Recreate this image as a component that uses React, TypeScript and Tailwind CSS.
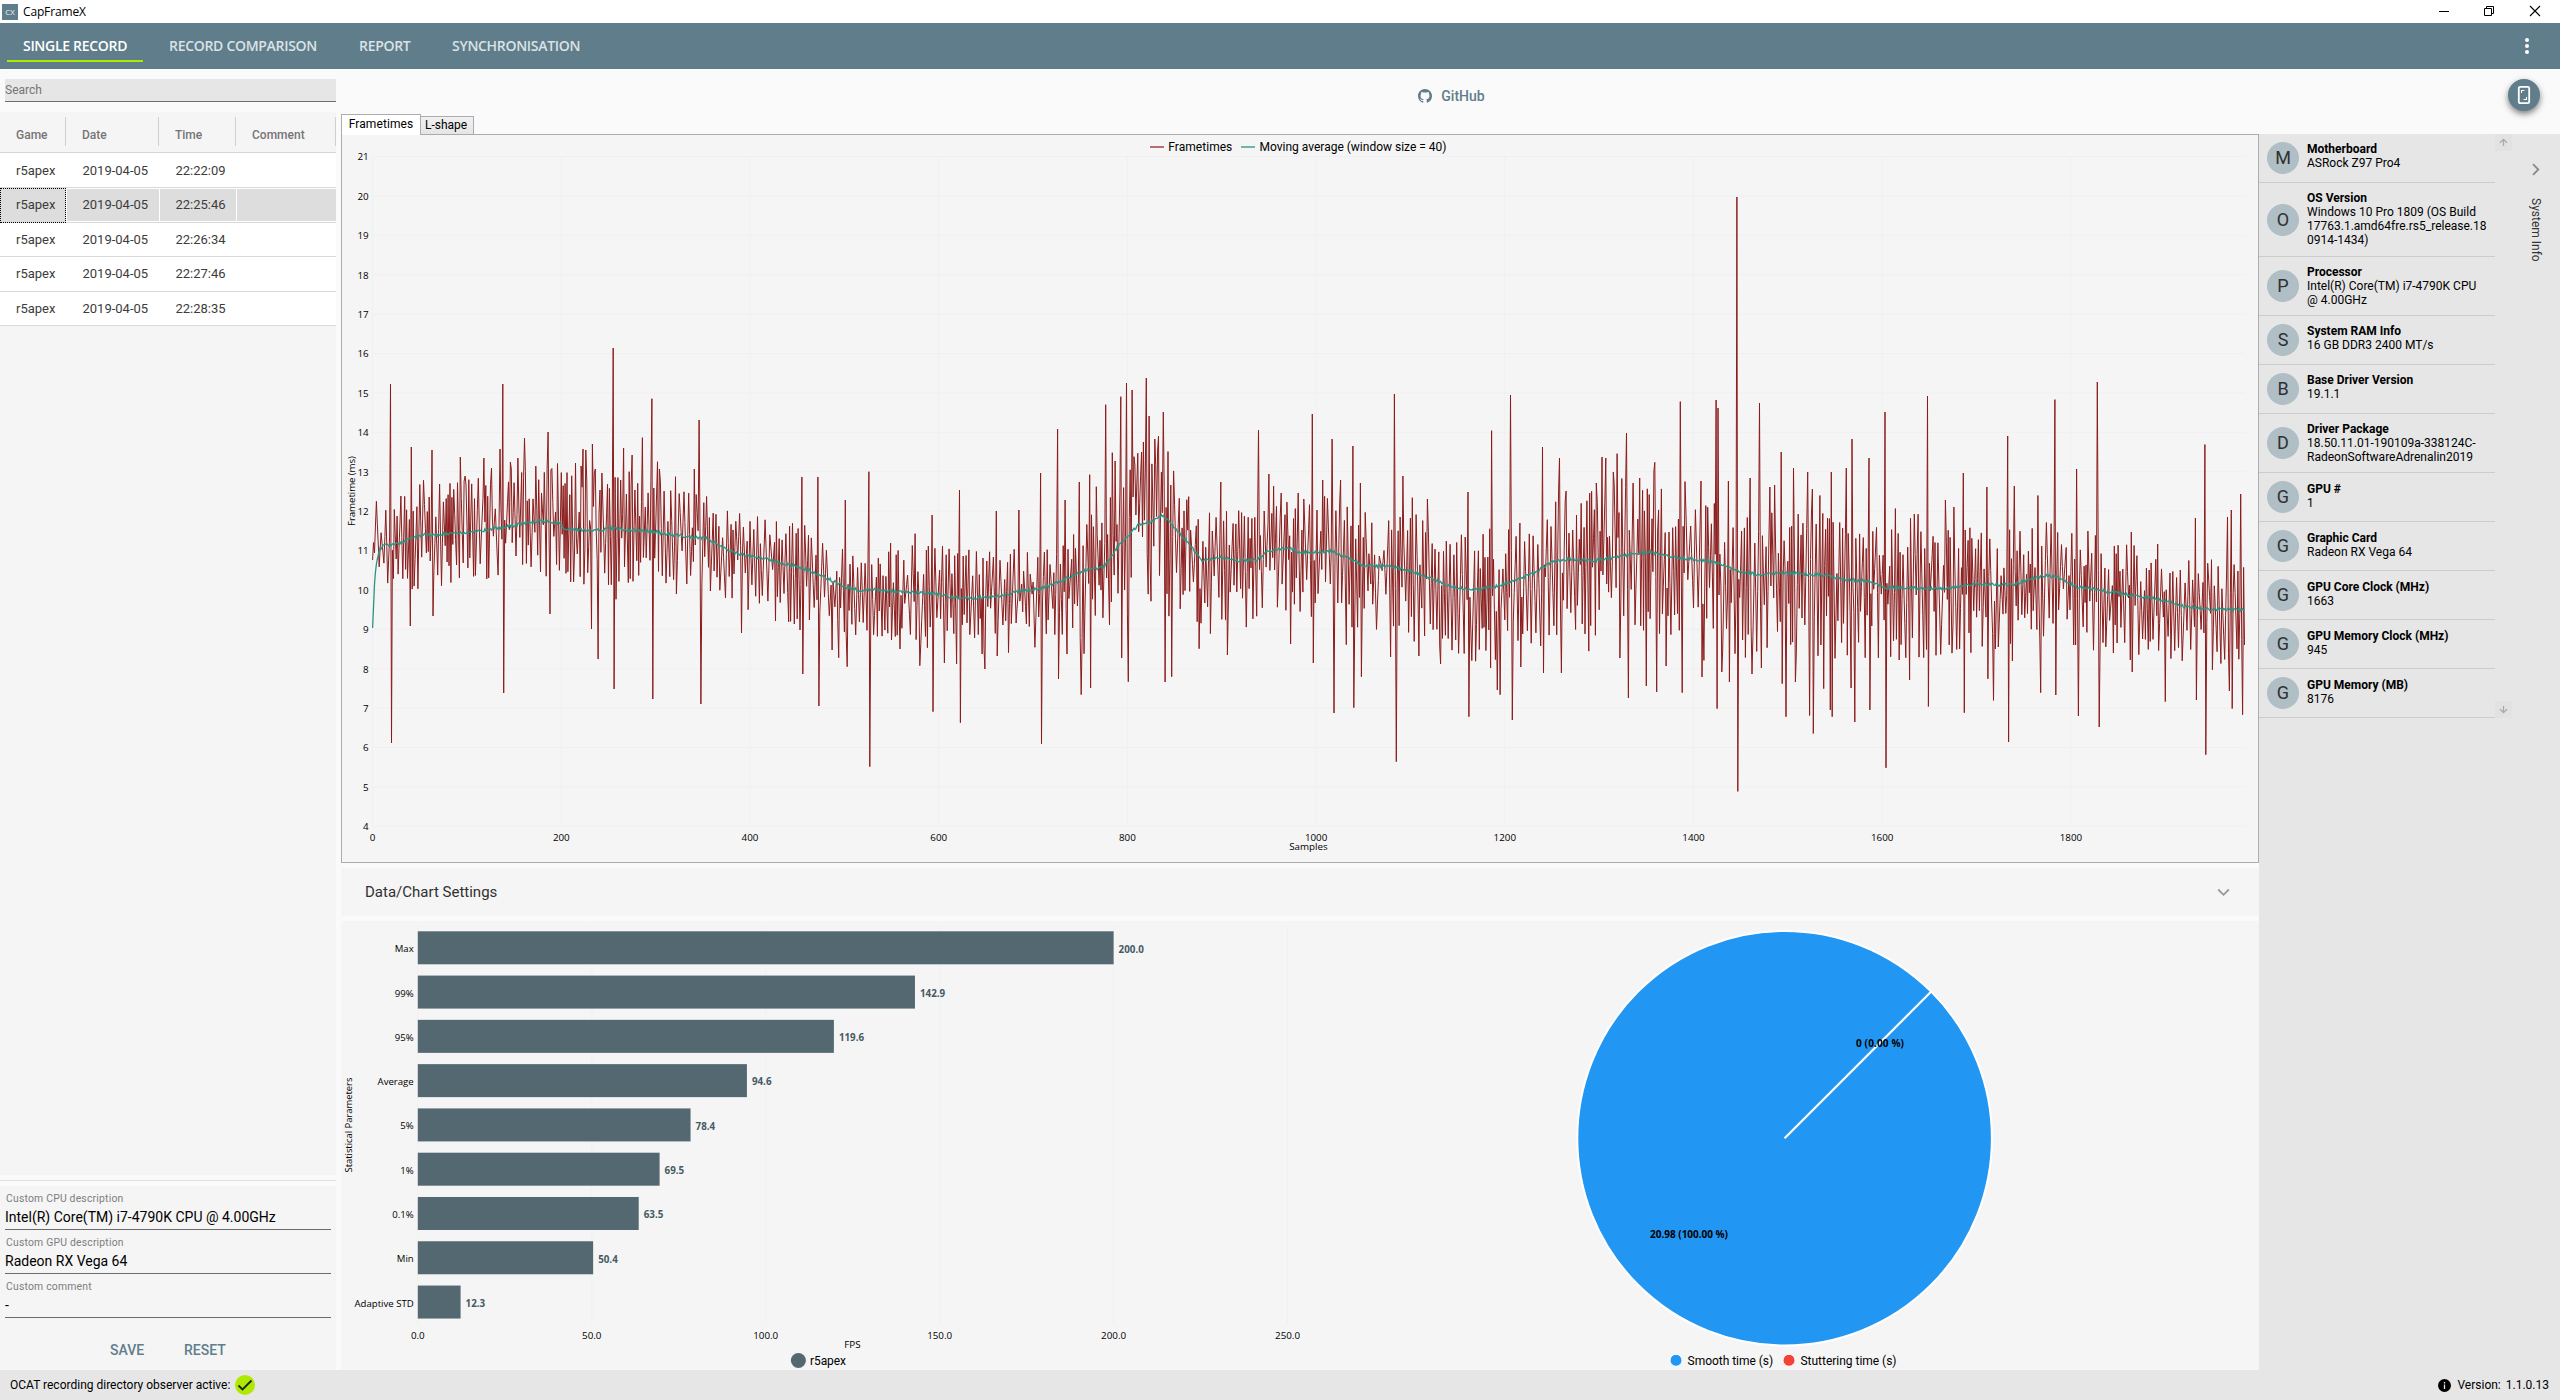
import React from "react";

const records = [
  { time: "22:22:09", h: "h-[35px]", pad: " pt-px" },
  { time: "22:25:46", h: "h-[35px]", pad: "", selected: true },
  { time: "22:26:34", h: "h-[34px]", pad: "" },
  { time: "22:27:46", h: "h-[35px]", pad: "" },
  { time: "22:28:35", h: "h-[34px]", pad: "" },
];

const UP1 = "-translate-y-px";
const UP2 = "-translate-y-[2px]";

const systemInfo: { title: string; lines: string[]; shift?: string; row?: string }[] = [
  { title: "Motherboard", lines: ["ASRock Z97 Pro4"], shift: UP2 },
  { title: "OS Version", lines: ["Windows 10 Pro 1809 (OS Build", "17763.1.amd64fre.rs5_release.18", "0914-1434)"], row: "h-[74px]", shift: UP1 },
  { title: "Processor", lines: ["Intel(R) Core(TM) i7-4790K CPU", "@ 4.00GHz"] },
  { title: "System RAM Info", lines: ["16 GB DDR3 2400 MT/s"], shift: UP2 },
  { title: "Base Driver Version", lines: ["19.1.1"], shift: UP2 },
  { title: "Driver Package", lines: ["18.50.11.01-190109a-338124C-", "RadeonSoftwareAdrenalin2019"] },
  { title: "GPU #", lines: ["1"], shift: UP1 },
  { title: "Graphic Card", lines: ["Radeon RX Vega 64"], shift: UP1 },
  { title: "GPU Core Clock (MHz)", lines: ["1663"], shift: UP1 },
  { title: "GPU Memory Clock (MHz)", lines: ["945"], shift: UP1 },
  { title: "GPU Memory (MB)", lines: ["8176"], shift: UP1 },
];

/* ---------- frametime series ---------- */

const X0 = 372.6;
const STEP = 0.9435;
const COUNT = 1985;

/* moving average key points: x, y */
const averageKeys: number[][] = [
  [373, 628], [374, 590], [376, 566], [379, 551], [383, 545], [391, 545], [400, 543], [412, 538], [424, 535], [450, 534],
  [470, 533], [490, 529], [510, 526], [530, 522], [545, 521], [558, 523], [565, 529], [575, 530], [600, 530], [612, 528],
  [630, 530], [650, 531], [668, 534], [690, 537], [705, 538], [720, 546], [735, 553], [750, 556], [770, 560], [790, 565],
  [805, 569], [820, 575], [835, 582], [845, 587], [860, 590], [880, 590], [900, 592], [930, 593], [950, 597], [970, 598],
  [1000, 596], [1020, 591], [1041, 588.7], [1061, 581], [1082, 571], [1104, 566.7], [1118, 546.7], [1139, 524],
  [1149, 522.7], [1163, 515], [1173.5, 526.7], [1186, 540], [1202, 561], [1220, 556.7], [1235, 561], [1257, 560],
  [1267, 551.7], [1288, 547.7], [1300, 553], [1331, 551], [1345, 556.7], [1363, 566], [1392, 566.7], [1412, 571.7],
  [1433, 579], [1453, 586.7], [1473.5, 590], [1494, 586.7], [1514, 580.7], [1535, 573], [1551, 562], [1571, 559],
  [1592, 560.7], [1612, 558], [1637, 553], [1650, 552], [1678, 558], [1704, 560], [1721, 564.5], [1739, 570.6],
  [1756, 574.7], [1782, 573], [1825.5, 575], [1843, 579], [1869, 581.6], [1888, 587.7], [1921, 588], [1947, 588],
  [1977, 584], [2012, 585], [2042, 576], [2055, 576], [2077, 587], [2099, 590], [2129, 595], [2164, 600], [2185, 607],
  [2207, 609], [2245, 610],
];

/* outliers: x, y */
const spikes: number[][] = [
  [390.4, 384], [391.5, 743], [411.7, 447], [410.5, 626], [432, 450], [433.2, 616], [460.7, 457], [464.6, 476], [484, 458],
  [491.7, 468], [500, 449], [502.7, 384], [503.9, 693], [510.6, 462], [518, 458], [524.7, 438], [548.4, 432], [550, 614],
  [551.2, 470], [575.6, 463], [581.4, 466], [583, 449], [586, 450], [592.5, 444], [591.6, 629], [595.5, 469], [598, 659],
  [601.8, 473], [613, 348], [614.2, 689], [624, 448], [632.3, 455], [642.5, 437.7], [652, 398.7], [653, 699], [659.4, 469],
  [675, 476.7], [694, 469], [698.7, 420], [700.7, 704], [741.8, 633], [802, 477], [803, 674], [818, 477], [819, 706],
  [832, 650], [839, 657.7], [845, 500], [847, 666.7], [869, 471.7], [870, 766.7], [900, 649], [920, 665.7], [932, 515],
  [933, 711.7], [944.5, 663], [959.5, 490], [960.5, 722.7], [982, 654], [985, 669], [996, 511], [997, 656], [1019, 510],
  [1040.4, 473], [1041.6, 744], [1057.8, 429], [1058.9, 679], [1065, 500], [1067, 654], [1079.6, 482], [1081, 694.7],
  [1089.6, 474.7], [1090.7, 688], [1096, 486.7], [1106, 404.7], [1112.7, 452.7], [1115, 461], [1121, 396.7], [1122, 658],
  [1126.8, 383], [1128, 681.7], [1132, 390], [1134.7, 465], [1141.6, 452], [1143.3, 442], [1146.5, 378], [1149.4, 416],
  [1155, 439], [1158, 450], [1163.7, 412], [1165, 682], [1171, 485], [1172, 676.7], [1188.6, 496.7], [1199, 648.7],
  [1220.8, 482], [1227, 655], [1258.8, 430], [1269, 474], [1274, 486], [1281, 493], [1290.6, 644], [1298, 493],
  [1312.6, 414], [1313.7, 663], [1323, 480], [1332, 439], [1334, 713], [1341, 480], [1353, 446], [1354, 707.7],
  [1360, 483], [1361, 676.7], [1394.7, 394], [1396, 761.7], [1403, 476], [1412, 497.7], [1419, 656], [1427.8, 499],
  [1441, 664], [1468, 492], [1469.2, 716.7], [1491.8, 430.7], [1490.8, 668], [1497.6, 690], [1500.4, 694.7], [1510, 395],
  [1512, 720], [1521, 667], [1542.8, 447], [1543.9, 673], [1559.6, 458], [1561, 673], [1566.5, 491], [1596, 483],
  [1601.6, 457], [1605.7, 458], [1613.5, 472], [1617.5, 453.7], [1620, 658], [1626.8, 433], [1628, 698], [1633, 483],
  [1640, 478], [1646, 686], [1655, 462.4], [1657, 692], [1653.5, 471], [1666, 666], [1680.7, 401.6], [1682.3, 692.7],
  [1701.3, 481], [1702.4, 677], [1716, 400], [1717.2, 708.6], [1718.4, 408], [1722, 672], [1728, 481], [1729, 682],
  [1737, 197], [1738.3, 791.4], [1750.5, 478], [1751.6, 674], [1759.6, 403], [1761, 668], [1770, 487], [1775, 485],
  [1781, 452], [1782.6, 683.7], [1786, 716.7], [1793.8, 468], [1795, 682], [1808, 472], [1810, 715.5], [1812.3, 489],
  [1813.5, 733.5], [1820, 495.5], [1824, 688.6], [1831.4, 472], [1830, 710], [1832.6, 716.7], [1846.7, 468],
  [1852.4, 439], [1851, 688], [1855, 722], [1869, 458], [1870.2, 710], [1885, 412], [1886.2, 767.8], [1895, 508.6],
  [1910, 680], [1927.7, 396], [1928.8, 706.5], [1945.6, 500], [1954, 507], [1963.3, 473], [1964.5, 712.7], [1987, 487],
  [1988.2, 678.8], [1993.8, 700.4], [2007.6, 436], [2009, 742], [2012, 661], [2014.6, 486], [2038, 495.5], [2041, 692.7],
  [2055, 399.6], [2056.2, 695], [2077, 469], [2078.2, 716], [2097.7, 382], [2098.9, 727], [2131, 532], [2132.2, 672],
  [2165.5, 701.6], [2195, 518], [2196.2, 700], [2205, 444.5], [2206.2, 754.7], [2227.5, 517], [2229, 691],
  [2231.2, 510], [2232.5, 708.6], [2241.2, 494], [2242.4, 714.7], [2244.5, 645],
];

/* typical half height of the noise band: x, upper, lower */
const bandKeys: number[][] = [
  [373, 30, 22], [400, 42, 48], [480, 46, 46], [560, 50, 52], [650, 50, 50], [720, 32, 48], [800, 42, 58], [860, 26, 40],
  [930, 44, 52], [1010, 40, 44], [1040, 34, 52], [1100, 50, 66], [1160, 70, 76], [1200, 38, 62], [1280, 46, 58],
  [1400, 50, 66], [1470, 46, 64], [1560, 50, 70], [1620, 66, 68], [1700, 50, 76], [1800, 54, 78], [1900, 50, 66],
  [1990, 48, 62], [2080, 46, 58], [2160, 42, 50], [2245, 46, 58],
];

const lerp = (keys: number[][], x: number, col: number) => {
  if (x <= keys[0][0]) return keys[0][col];
  for (let i = 1; i < keys.length; i++) {
    if (x <= keys[i][0]) {
      const a = keys[i - 1];
      const b = keys[i];
      return a[col] + ((b[col] - a[col]) * (x - a[0])) / (b[0] - a[0]);
    }
  }
  return keys[keys.length - 1][col];
};

const makeRandom = (seed: number) => () => {
  seed = (seed * 1664525 + 1013904223) % 4294967296;
  return seed / 4294967296;
};

const buildSeries = () => {
  const rnd = makeRandom(20190405);
  const ys: number[] = new Array(COUNT).fill(0);
  const avg: string[] = [];
  let up = true;
  let prev = 0;
  ys[0] = 560;
  while (prev < COUNT - 1) {
    /* swings last one to three samples, in between the line is straight */
    const r = rnd();
    const next = Math.min(COUNT - 1, prev + (r < 0.42 ? 1 : r < 0.86 ? 2 : 3));
    const x = X0 + next * STEP;
    const base = next < 10 ? 548 : lerp(averageKeys, x, 1);
    const m = Math.pow(rnd(), 0.55) * (rnd() < 0.1 ? 1.25 : 1);
    ys[next] = base + (up ? -1.2 * m * lerp(bandKeys, x, 1) : 1.12 * m * lerp(bandKeys, x, 2));
    for (let k = prev + 1; k < next; k++) {
      ys[k] = ys[prev] + ((ys[next] - ys[prev]) * (k - prev)) / (next - prev);
    }
    prev = next;
    up = !up;
  }
  for (let i = 0; i < COUNT; i++) {
    const x = X0 + i * STEP;
    avg.push(x.toFixed(1) + "," + (lerp(averageKeys, x, 1) + (i < 8 ? 0 : (rnd() - 0.5) * 3.2)).toFixed(1));
  }
  const taken = new Set<number>();
  spikes.forEach(([x, y]) => {
    let i = Math.round((x - X0) / STEP);
    if (taken.has(i)) i += 1;
    if (i >= COUNT) i = COUNT - 1;
    taken.add(i);
    ys[i] = y;
  });
  return {
    frames: ys.map((y, i) => (X0 + i * STEP).toFixed(1) + "," + y.toFixed(1)).join(" "),
    average: avg.join(" "),
  };
};

const series = buildSeries();

const AXIS = "font-['Open_Sans',sans-serif] text-[9.8px]";

function FrametimeChart() {
  const yTicks = Array.from({ length: 18 }, (_, i) => 21 - i);
  const xTicks = Array.from({ length: 10 }, (_, i) => i * 200);
  return (
    <svg viewBox="342 135 1916 727" className="block h-[727px] w-[1916px]">
      {yTicks.map((t, i) => (
        <g key={t}>
          <line x1="373" x2="2245" y1={156.5 + i * 39.4} y2={156.5 + i * 39.4} stroke="#f0f0f0" />
          <text x="368.6" y={160.3 + i * 39.4} textAnchor="end" className={AXIS}>{t}</text>
        </g>
      ))}
      {xTicks.map((t) => (
        <g key={t}>
          <line x1={X0 + t * STEP} x2={X0 + t * STEP} y1="156" y2="826" stroke="#f0f0f0" />
          <text x={X0 + t * STEP} y="841" textAnchor="middle" className={AXIS}>{t}</text>
        </g>
      ))}
      <polyline points={series.frames} fill="none" stroke="#8b1c1c" strokeWidth="1" strokeLinejoin="bevel" />
      <polyline points={series.average} fill="none" stroke="#2a9482" strokeWidth="1.3" />
      <line x1="1150" x2="1164" y1="147" y2="147" stroke="#b96f6f" strokeWidth="2" />
      <text x="1168.3" y="151.3" textLength="64" className="font-[Roboto,sans-serif] text-[12px]">Frametimes</text>
      <line x1="1241" x2="1255" y1="147" y2="147" stroke="#6fb5ab" strokeWidth="2" />
      <text x="1259.5" y="151.3" textLength="187" className="font-[Roboto,sans-serif] text-[12px]">Moving average (window size = 40)</text>
      <text transform="translate(354.5 491) rotate(-90)" textAnchor="middle" textLength="70" className={AXIS}>Frametime (ms)</text>
      <text x="1308.5" y="850" textAnchor="middle" className={AXIS}>Samples</text>
    </svg>
  );
}

const bars: [string, number][] = [
  ["Max", 200], ["99%", 142.9], ["95%", 119.6], ["Average", 94.6], ["5%", 78.4],
  ["1%", 69.5], ["0.1%", 63.5], ["Min", 50.4], ["Adaptive STD", 12.3],
];

function BarChart() {
  return (
    <svg viewBox="341 921 959 449" className="block h-[449px] w-[959px]">
      {[0, 50, 100, 150, 200, 250].map((t) => (
        <g key={t}>
          <line x1={417.8 + t * 3.479} x2={417.8 + t * 3.479} y1="927" y2="1324" stroke="#f0f0f0" />
          <text x={417.8 + t * 3.479} y="1339" textAnchor="middle" className={AXIS}>{t.toFixed(1)}</text>
        </g>
      ))}
      {bars.map(([name, v], i) => (
        <g key={name}>
          <rect x="417.8" y={931.3 + i * 44.28} width={v * 3.479} height="33" fill="#546872" />
          <text x="413.7" y={952.3 + i * 44.28} textAnchor="end" className="font-['Open_Sans',sans-serif] text-[9.6px]">{name}</text>
          <text x={422.8 + v * 3.479} y={952.6 + i * 44.28} fill="#455a64" className="font-['Open_Sans',sans-serif] text-[9.8px] font-bold">
            {v.toFixed(1)}
          </text>
        </g>
      ))}
      <text x="852.4" y="1348" textAnchor="middle" className={AXIS}>FPS</text>
      <text transform="translate(351.5 1125) rotate(-90)" textAnchor="middle" textLength="95" className="font-['Open_Sans',sans-serif] text-[9.5px]">
        Statistical Parameters
      </text>
      <circle cx="798.4" cy="1360.5" r="7.5" fill="#546872" />
      <text x="810" y="1365" textLength="36" className="font-[Roboto,sans-serif] text-[12px]">r5apex</text>
    </svg>
  );
}

function PieChart() {
  return (
    <svg viewBox="1300 921 959 449" className="block h-[449px] w-[959px]">
      <circle cx="1784.6" cy="1138.2" r="207.3" fill="#2196f3" stroke="#fff" strokeWidth="2" />
      <line x1="1784.6" y1="1138.2" x2="1931" y2="991.8" stroke="#fff" strokeWidth="2.2" />
      <text x="1880" y="1047" textAnchor="middle" textLength="48" className="font-['Open_Sans',sans-serif] text-[10px] font-bold">0 (0.00 %)</text>
      <text x="1689" y="1238" textAnchor="middle" textLength="78" className="font-['Open_Sans',sans-serif] text-[10px] font-bold">20.98 (100.00 %)</text>
      <circle cx="1676" cy="1360.3" r="6" fill="#2196f3" stroke="#fff" />
      <text x="1687.6" y="1365" textLength="85.5" className="font-[Roboto,sans-serif] text-[12px]">Smooth time (s)</text>
      <circle cx="1789" cy="1360.3" r="6" fill="#f44336" stroke="#fff" />
      <text x="1800.5" y="1365" textLength="96" className="font-[Roboto,sans-serif] text-[12px]">Stuttering time (s)</text>
    </svg>
  );
}

function TitleBar() {
  return (
    <div className="flex h-[23px] items-center bg-white pl-[2px]">
      <div className="flex h-4 w-4 items-center justify-center bg-[#607d8b] font-['Open_Sans',sans-serif] text-[8px] text-white/90">CX</div>
      <span className="ml-[5px] font-['Open_Sans',sans-serif] text-[12px] tracking-[-0.15px] text-black">CapFrameX</span>
      <div className="ml-auto flex -translate-y-px items-center pr-[19px]">
        <svg width="12" height="12" className="mr-[33px]"><path d="M1 6.5h10" stroke="#000" /></svg>
        <svg width="12" height="12" className="mr-[34px]" fill="none" stroke="#000">
          <path d="M1.5 3.5h7v7h-7zM3.5 3.5v-2h7v7h-2" />
        </svg>
        <svg width="12" height="12" stroke="#000" strokeWidth="1.1"><path d="M1 1l10 10M11 1L1 11" /></svg>
      </div>
    </div>
  );
}

function NavBar() {
  const tab = "flex h-[46px] items-center pb-[2px] font-['Open_Sans',sans-serif] text-[14px] font-semibold";
  return (
    <div className="flex h-[46px] bg-[#607d8b] pl-[7px]">
      <div className={tab + " relative w-[136px] pl-4 whitespace-nowrap text-white"}>
        <span className="tracking-[-0.3px]">SINGLE RECORD</span>
        <div className="absolute bottom-[7px] left-0 h-[2px] w-[136px] bg-[#aeea00]" />
      </div>
      <div className={tab + " ml-[26px] w-[148px] whitespace-nowrap text-[#dbe2e5]"}><span className="tracking-[-0.3px]">RECORD COMPARISON</span></div>
      <div className={tab + " ml-[42px] w-[51px] text-[#dbe2e5]"}><span className="tracking-[-0.3px]">REPORT</span></div>
      <div className={tab + " ml-[42px] text-[#dbe2e5]"}><span className="tracking-[-0.3px]">SYNCHRONISATION</span></div>
      <svg width="6" height="46" className="ml-auto mr-[30px]" fill="#fff">
        <circle cx="3" cy="17" r="2" /><circle cx="3" cy="23" r="2" /><circle cx="3" cy="29" r="2" />
      </svg>
    </div>
  );
}

function Field({ label, value }: { label: string; value: string }) {
  return (
    <div className="h-11 pl-[5px]">
      <div className="h-[15px] pl-px pt-[6px] text-[10.4px] leading-[14px] tracking-[0.2px] text-[#7d7d7d]">{label}</div>
      <div className="mr-[5px] h-[29px] border-b border-[#6b6b6b] pt-[6px] text-[14px] leading-[20px] text-black">{value}</div>
    </div>
  );
}

function Sidebar() {
  const head = "mt-[5px] flex h-[29px] items-center border-r border-[#cfcfcf] pt-[7px]";
  return (
    <div className="flex w-[336px] flex-col">
      <div className="ml-[5px] mt-[10px] flex h-[23px] items-center border-b border-[#6f6f6f] bg-[#e6e6e6] text-[12px] text-[#757575]">Search</div>
      <div className="mt-[10px] h-[1063px] bg-[#f5f5f5]">
        <div className="flex h-[41px] border-b border-[#d5d5d5] text-[12px] font-medium text-[#757575]">
          <div className={head + " w-[66px] pl-4"}>Game</div>
          <div className={head + " w-[93px] pl-4"}>Date</div>
          <div className={head + " w-[77px] pl-4"}>Time</div>
          <div className={head + " w-[100px] pl-4"}>Comment</div>
        </div>
        {records.map((r) => {
          const cell = r.selected ? " mb-px mt-px bg-[#dddddd]" : "";
          return (
            <div key={r.time} className={r.h + r.pad + " flex border-b border-[#d9d9d9] bg-white text-[13px] text-[#3c3c3c]"}>
              {r.selected ? (
                <div className="-mb-px flex w-[66px] items-center border border-dotted border-black bg-[#dddddd] pb-px pl-[15px]">r5apex</div>
              ) : (
                <div className="flex w-[66px] items-center pl-4">r5apex</div>
              )}
              <div className={"ml-px flex w-[92px] items-center pl-[15.5px]" + cell}>2019-04-05</div>
              <div className={"ml-px flex w-[76px] items-center pl-[15.5px]" + cell}>{r.time}</div>
              <div className={"ml-px flex-1 " + cell} />
            </div>
          );
        })}
      </div>
      <div className="mt-[5px] h-px bg-[#e0e0e0]" />
      <div className="mt-[5px] flex-1 bg-[#f5f5f5]">
        <Field label="Custom CPU description" value="Intel(R) Core(TM) i7-4790K CPU @ 4.00GHz" />
        <Field label="Custom GPU description" value="Radeon RX Vega 64" />
        <Field label="Custom comment" value="-" />
        <div className="mt-[22px] flex pl-[110px] text-[14px] leading-[20px] font-medium text-[#607d8b]">
          <span className="w-[74px]">SAVE</span>
          <span>RESET</span>
        </div>
      </div>
    </div>
  );
}

function SystemInfo() {
  return (
    <div className="mt-[20px] flex w-[301px] bg-[#e6e6e6]">
      <div className="w-[236px]">
        {systemInfo.map((s) => (
          <div key={s.title} className={"flex items-center border-b border-[#cccccc] py-2 pl-2 " + (s.row ?? "")}>
            <div className="flex h-8 w-8 shrink-0 items-center justify-center rounded-full bg-[#b0bec5] text-[18px] leading-none text-[#303030]">{s.title[0]}</div>
            <div className={"ml-2 whitespace-nowrap text-[12px] leading-[14px] text-black " + (s.shift ?? "")}>
              <div className="font-bold">{s.title}</div>
              {s.lines.map((l) => <div key={l}>{l}</div>)}
            </div>
          </div>
        ))}
      </div>
      <div className="flex h-[584px] w-[17px] flex-col justify-between">
        <svg width="17" height="17" className="bg-[#e2e2e2]" fill="none" stroke="#aaa" strokeWidth="1.3"><path d="M8.5 12V5.5M5 8.7l3.5-3.4L12 8.7" /></svg>
        <svg width="17" height="17" className="bg-[#e2e2e2]" fill="none" stroke="#aaa" strokeWidth="1.3"><path d="M8.5 5v6.5M5 8.3l3.5 3.4L12 8.3" /></svg>
      </div>
      <div className="flex flex-1 flex-col items-center pt-[29px]">
        <svg width="8" height="13" fill="none" stroke="#8a8a8a" strokeWidth="1.8"><path d="M1 1.2l5.3 5.3L1 11.8" /></svg>
        <span className="mt-[22px] text-[12px] leading-[14px] text-[#333] [writing-mode:vertical-rl]">System Info</span>
      </div>
    </div>
  );
}

function Toolbar() {
  return (
    <div className="relative flex h-[45px] items-center justify-center pl-[2px] pt-[9px] text-[#607d8b]">
      <svg width="14" height="14" viewBox="0 0 16 16" fill="#607d8b" className="mr-[9px]">
        <path d="M8 0C3.58 0 0 3.58 0 8c0 3.54 2.29 6.53 5.47 7.59.4.07.55-.17.55-.38 0-.19-.01-.82-.01-1.49-2.01.37-2.53-.49-2.69-.94-.09-.23-.48-.94-.82-1.13-.28-.15-.68-.52-.01-.53.63-.01 1.08.58 1.23.82.72 1.21 1.87.87 2.33.66.07-.52.28-.87.51-1.07-1.78-.2-3.64-.89-3.64-3.95 0-.87.31-1.59.82-2.15-.08-.2-.36-1.02.08-2.12 0 0 .67-.21 2.2.82.64-.18 1.32-.27 2-.27s1.36.09 2 .27c1.53-1.04 2.2-.82 2.2-.82.44 1.1.16 1.92.08 2.12.51.56.82 1.27.82 2.15 0 3.07-1.87 3.75-3.65 3.95.29.25.54.73.54 1.48 0 1.07-.01 1.93-.01 2.2 0 .21.15.46.55.38A8.01 8.01 0 0 0 16 8c0-4.42-3.58-8-8-8z" />
      </svg>
      <span className="text-[14px] font-medium">GitHub</span>
      <div className="absolute right-[20px] top-[10px] flex h-8 w-8 items-center justify-center rounded-full bg-[#607d8b] shadow-[0_3px_6px_rgba(0,0,0,0.5)]">
        <svg width="14" height="20" fill="none" stroke="#fff">
          <rect x="1.8" y="1.8" width="10.4" height="16.4" rx="1.5" strokeWidth="1.8" />
          <path d="M4.5 8V5.5H7.4M9.5 12v2.5H6.6" strokeWidth="1.1" />
        </svg>
      </div>
    </div>
  );
}

export default function App() {
  return (
    <div className="flex h-[1400px] w-[2560px] flex-col overflow-hidden bg-[#fafafa] font-[Roboto,sans-serif]">
      <TitleBar />
      <NavBar />
      <div className="flex h-[1301px]">
        <Sidebar />
        <div className="ml-[5px] flex flex-1 flex-col">
          <Toolbar />
          <div className="flex flex-1">
            <div className="w-[1918px]">
              <div className="flex h-[20px] items-end text-[12px] text-black">
                <div className="relative z-10 -mb-px flex h-[21px] w-[80px] items-center justify-center border border-b-0 border-[#acacac] bg-white pb-[2px]">
                  <span className="tracking-[0.1px]">Frametimes</span>
                </div>
                <div className="flex h-[18px] w-[53px] items-center border border-b-0 border-l-0 border-[#acacac] bg-gradient-to-b from-[#f0f0f0] to-[#e5e5e5] pb-px pl-[4px]">L-shape</div>
              </div>
              <div className="h-[729px] border border-[#acacac] bg-[#f5f5f5]"><FrametimeChart /></div>
              <div className="mt-[5px] flex h-[48px] items-center justify-between bg-[#f5f5f5] pl-6 pr-[29px]">
                <span className="text-[15px] text-[#303030]">Data/Chart Settings</span>
                <svg width="13" height="9" fill="none" stroke="#999" strokeWidth="1.8"><path d="M1.2 1.5l5.3 5.3 5.3-5.3" /></svg>
              </div>
              <div className="mt-[5px] flex h-[449px] bg-[#f5f5f5]">
                <BarChart />
                <PieChart />
              </div>
            </div>
            <SystemInfo />
          </div>
        </div>
      </div>
      <div className="flex h-[30px] items-center bg-[#e6e6e6] pl-[10px] pr-[11px] text-[12px] text-black">
        <span className="w-[225px] whitespace-nowrap">OCAT recording directory observer active:</span>
        <svg width="20" height="20"><circle cx="10" cy="10" r="10" fill="#aeea00" /><path d="M3.5 10.5l4 4L16.5 5.5" fill="none" stroke="#222" strokeWidth="1.8" /></svg>
        <svg width="13" height="13" className="ml-auto mr-[6px]"><circle cx="6.5" cy="6.5" r="6.5" /><path d="M6.5 3v1.5M6.5 5.6v4.4" stroke="#e6e6e6" strokeWidth="1.3" /></svg>
        <span>Version:</span>
        <span className="ml-[5px]">1.1.0.13</span>
      </div>
    </div>
  );
}
